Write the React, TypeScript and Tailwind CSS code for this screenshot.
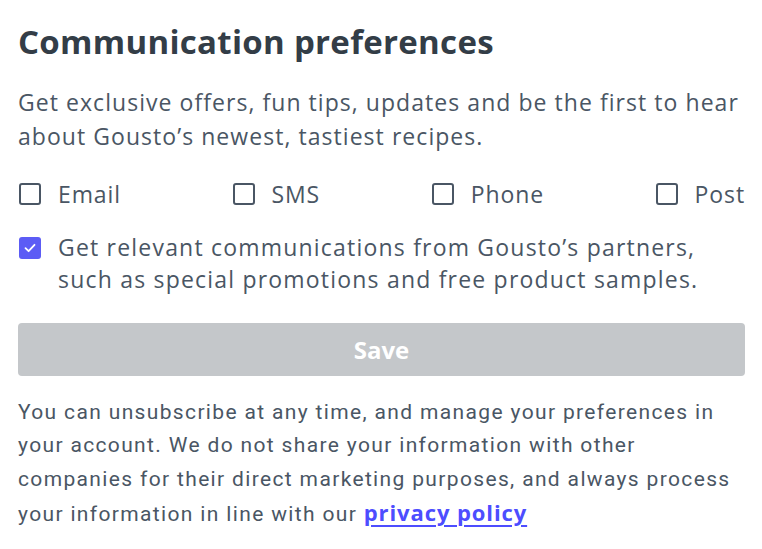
import React from "react";

function Box({ checked }: { checked?: boolean }) {
  if (checked) {
    return (
      <span className="flex h-[22px] w-[22px] shrink-0 items-center justify-center rounded-[3px] bg-[#5c5cf5]">
        <svg width="14" height="14" viewBox="0 0 14 14" fill="none">
          <path d="M2.5 7.2 L5.6 10.2 L11.5 3.8" stroke="#fff" strokeWidth="1.8" strokeLinecap="round" strokeLinejoin="round" />
        </svg>
      </span>
    );
  }
  return <span className="block h-[22px] w-[22px] shrink-0 rounded-[3px] border-2 border-[#4a5664]" />;
}

export default function App() {
  const font = { fontFamily: '"Open Sans", "Noto Sans", sans-serif' };
  return (
    <div className="w-[762px] h-[549px] bg-white px-[18px] pt-[22px] text-[#4a5664]" style={font}>
      <h1 className="text-[33px] font-bold leading-[40px] text-[#333d47] tracking-[0.3px]">Communication preferences</h1>
      <p className="mt-[23px] w-[730px] text-[23px] leading-[34px] tracking-[1.05px]">
        Get exclusive offers, fun tips, updates and be the first to hear about Gousto’s newest, tastiest recipes.
      </p>
      <div className="mt-[28px] flex w-[727px] items-center justify-between">
        {["Email", "SMS", "Phone", "Post"].map((l, i) => (
          <label key={l} className={"flex items-center gap-[17px] text-[23px] leading-[26px] tracking-[0.9px] " + (i === 0 ? "pl-px" : "")}>
            <Box />
            <span>{l}</span>
          </label>
        ))}
      </div>
      <div className="mt-[24px] flex items-start gap-[17px] pl-px">
        <div className="pt-[6px]">
          <Box checked />
        </div>
        <p className="text-[23px] leading-[32px] tracking-[1.2px]">
          Get relevant communications from Gousto’s partners,
          <br />
          such as special promotions and free product samples.
        </p>
      </div>
      <button className="mt-[28px] flex h-[53px] w-[727px] items-center justify-center rounded-[4px] bg-[#c4c7ca] text-[24px] font-bold text-white">
        Save
      </button>
      <p
        className="mt-[20px] w-[727px] text-[21px] leading-[33.3px] tracking-[1.35px] text-[#4a5664]"
        style={{ fontFamily: '"Roboto", sans-serif' }}
      >
        You can unsubscribe at any time, and manage your preferences in your account. We do not share your information with other companies for their direct marketing purposes, and always process your information in line with our{" "}
        <a className="text-[22px] font-bold text-[#4d4dff] underline decoration-[2px] underline-offset-[4px] tracking-[0.9px]" style={font}>
          privacy policy
        </a>
      </p>
    </div>
  );
}
